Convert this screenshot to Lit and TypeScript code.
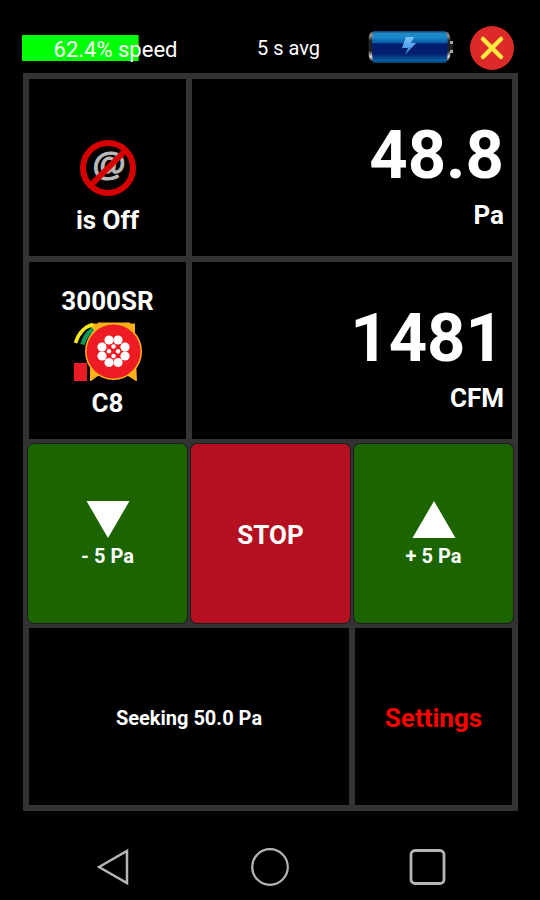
import { LitElement, html, css, svg } from "lit";
import { customElement, state } from "lit/decorators.js";
import { styleMap } from "lit/directives/style-map.js";

const outerDots = [
  [35, 18], [44, 18], [51, 25], [51, 34], [44, 40.5], [35, 40.5], [28, 34], [28, 25],
];
const innerDots = [
  [39.5, 24.5], [35, 29.2], [44, 29.2], [39.5, 34],
];

@customElement("app-root")
export class AppRoot extends LitElement {
  @state() private speed = 62.4;
  @state() private pressure = 48.8;
  @state() private flow = 1481;
  @state() private target = 50;

  static styles = css`
    :host {
      display: grid;
      grid-template-rows: 73px 1fr 89px;
      min-height: 100vh;
      background: #000;
      color: #fff;
      font-family: Roboto, "Noto Sans", sans-serif;
      font-size: 26px;
      line-height: 30px;
      font-weight: 700;
    }
    * {
      box-sizing: border-box;
    }
    button {
      margin: 0;
      padding: 0;
      border: 0;
      background: #000;
      color: inherit;
      font: inherit;
      cursor: pointer;
    }
    svg {
      display: block;
      flex: none;
    }
    .status {
      display: flex;
      align-items: center;
      padding: 23px 26px 0 22px;
      font-weight: 400;
    }
    .speed {
      flex: 187 1 0;
      height: 26px;
      font-size: 22px;
      line-height: 30px;
      text-align: center;
      white-space: nowrap;
      background: linear-gradient(#0f0, #0f0) left / var(--level) 100% no-repeat;
    }
    .average {
      flex: 159 1 0;
      font-size: 20px;
      line-height: 26px;
      text-align: center;
      white-space: nowrap;
    }
    .close {
      margin-left: 16px;
      border-radius: 50%;
    }
    .panel {
      display: grid;
      grid-template-columns: repeat(3, 1fr);
      grid-template-rows: repeat(4, 1fr);
      gap: 6px;
      padding: 6px;
      margin: 0 22px 0 23px;
      background: #333;
    }
    .cell {
      display: flex;
      flex-direction: column;
      align-items: center;
      justify-content: center;
      gap: 6px;
      padding-top: 2px;
      background: #000;
    }
    .wide {
      grid-column: span 2;
    }
    .mail {
      gap: 9px;
      padding-top: 40px;
    }
    .reading {
      align-items: flex-end;
      gap: 5px;
      padding: 10px 8px 0 0;
    }
    .value {
      font-size: 67px;
      line-height: 80px;
    }
    .key {
      margin: -1px;
      border-radius: 6px;
      box-shadow: 0 0 0 1px #1e1e1e;
    }
    .step {
      background: #1b6400;
    }
    .stop {
      background: #b41020;
    }
    .small {
      font-size: 20px;
      line-height: 24px;
    }
    .settings {
      color: #f00;
    }
    .at {
      font: 700 34px "Liberation Sans", sans-serif;
    }
    .nav {
      display: grid;
      grid-template-columns: repeat(3, 1fr);
      justify-items: center;
      align-items: center;
      padding: 23px 34px 0;
    }
  `;

  private battery() {
    return html`<svg width="86" height="34" viewBox="0 0 86 34" role="img" aria-label="Battery charging">
      <defs>
        <linearGradient id="cell" x1="0" y1="0" x2="0" y2="1">
          <stop offset="0" stop-color="#0a3c66" />
          <stop offset="0.08" stop-color="#1f8bc4" />
          <stop offset="0.2" stop-color="#1787ca" />
          <stop offset="0.37" stop-color="#0a5ba6" />
          <stop offset="0.4" stop-color="#021d6c" />
          <stop offset="0.72" stop-color="#02206f" />
          <stop offset="0.92" stop-color="#0560a2" />
          <stop offset="1" stop-color="#063a60" />
        </linearGradient>
        <linearGradient id="metal" x1="0" y1="0" x2="0" y2="1">
          <stop offset="0" stop-color="#555" />
          <stop offset="0.12" stop-color="#999" />
          <stop offset="0.3" stop-color="#222" />
          <stop offset="0.65" stop-color="#222" />
          <stop offset="0.85" stop-color="#ddd" />
          <stop offset="1" stop-color="#333" />
        </linearGradient>
        <linearGradient id="bolt" x1="0" y1="0" x2="0" y2="1">
          <stop offset="0" stop-color="#7cc4fa" />
          <stop offset="1" stop-color="#2f7fd6" />
        </linearGradient>
      </defs>
      <path d="M3 1Q0 3 0.500 16Q0 27 3 30H6V1Z" fill="url(#metal)" />
      <path d="M77 1H80Q83 5 83 16Q83 26 80 30H77Z" fill="url(#metal)" />
      <path d="M82 10H85V13H82ZM82 19H85V22H82Z" fill="#aaa" />
      <path d="M83 13H85V19H83Z" fill="#222" />
      <path d="M5 0H78Q80 8 80 16Q80 25 78 32H5Q4 25 4 16Q4 8 5 0Z" fill="url(#cell)" />
      <path d="M38 6H46L43 12H48L37 24L40 17H34Z" fill="url(#bolt)" />
    </svg>`;
  }

  private closeIcon() {
    return html`<svg width="44" height="44" viewBox="0 0 44 44">
      <circle cx="22" cy="22" r="22" fill="#dc2a2a" />
      <path d="M13 13L31 31M31 13L13 31" stroke="#ffe83b" stroke-width="4.500" stroke-linecap="round" />
    </svg>`;
  }

  private mailIcon() {
    return html`<svg width="56" height="56" viewBox="0 0 56 56">
      <text class="at" x="29" y="35" text-anchor="middle" fill="#b9b9b9" stroke="#b9b9b9">@</text>
      <circle cx="28" cy="28" r="25" fill="none" stroke="#d60000" stroke-width="6" />
      <path d="M11 45L45 11" stroke="#d60000" stroke-width="6" />
    </svg>`;
  }

  private fanIcon() {
    return html`<svg width="68" height="60" viewBox="0 0 68 60">
      <path d="M17 1.500H24V0.500H56V1.500H61V20L63 59H62L54 54H24L17 59H16V34L18 20Z" fill="#fbb117" />
      <path d="M1.500 21Q6 6 19 2.500" fill="none" stroke="#f6ea1c" stroke-width="3.500" />
      <path d="M8.500 22.500Q11 13 19 7" fill="none" stroke="#0b9a57" stroke-width="4.500" />
      <path d="M0 41H13V59H0Z" fill="#ed1c24" />
      <circle cx="39.500" cy="29.500" r="28.500" fill="#fbb117" />
      <circle cx="39.500" cy="29.500" r="27" fill="#ed1c24" />
      ${outerDots.map(([x, y]) => svg`<circle cx=${x} cy=${y} r="4.600" fill="#fff" />`)}
      ${innerDots.map(([x, y]) => svg`<circle cx=${x} cy=${y} r="2.200" fill="#fff" />`)}
    </svg>`;
  }

  render() {
    return html`
      <header class="status">
        <div
          class="speed"
          role="progressbar"
          aria-label="Fan speed"
          aria-valuenow=${this.speed}
          style=${styleMap({ "--level": `${this.speed}%` })}
        >${this.speed}% speed</div>
        <div class="average">5 s avg</div>
        ${this.battery()}
        <button class="close" aria-label="Close">${this.closeIcon()}</button>
      </header>
      <main class="panel">
        <button class="cell mail">${this.mailIcon()}<span>is Off</span></button>
        <section class="cell reading wide">
          <span class="value">${this.pressure.toFixed(1)}</span><span>Pa</span>
        </section>
        <button class="cell"><span>3000SR</span>${this.fanIcon()}<span>C8</span></button>
        <section class="cell reading wide">
          <span class="value">${this.flow}</span><span>CFM</span>
        </section>
        <button class="cell key step" @click=${() => (this.target -= 5)}>
          <svg width="44" height="37" viewBox="0 0 44 37"><path d="M0.500 0H43.500L22 37Z" fill="#fff" /></svg>
          <span class="small">- 5 Pa</span>
        </button>
        <button class="cell key stop">STOP</button>
        <button class="cell key step" @click=${() => (this.target += 5)}>
          <svg width="44" height="37" viewBox="0 0 44 37"><path d="M0.500 37H43.500L22 0Z" fill="#fff" /></svg>
          <span class="small">+ 5 Pa</span>
        </button>
        <section class="cell wide small">Seeking ${this.target.toFixed(1)} Pa</section>
        <button class="cell settings">Settings</button>
      </main>
      <nav class="nav">
        <button aria-label="Back">
          <svg width="32" height="38" viewBox="0 0 32 38">
            <path d="M2 19L30 3V35Z" fill="none" stroke="#b5b5b5" stroke-width="2.500" />
          </svg>
        </button>
        <button aria-label="Home">
          <svg width="38" height="38" viewBox="0 0 38 38">
            <circle cx="19" cy="19" r="17.800" fill="none" stroke="#b5b5b5" stroke-width="2.200" />
          </svg>
        </button>
        <button aria-label="Recent apps">
          <svg width="38" height="38" viewBox="0 0 38 38">
            <rect x="3" y="2.500" width="33" height="33" rx="4" fill="none" stroke="#b5b5b5" stroke-width="2.800" />
          </svg>
        </button>
      </nav>
    `;
  }
}
